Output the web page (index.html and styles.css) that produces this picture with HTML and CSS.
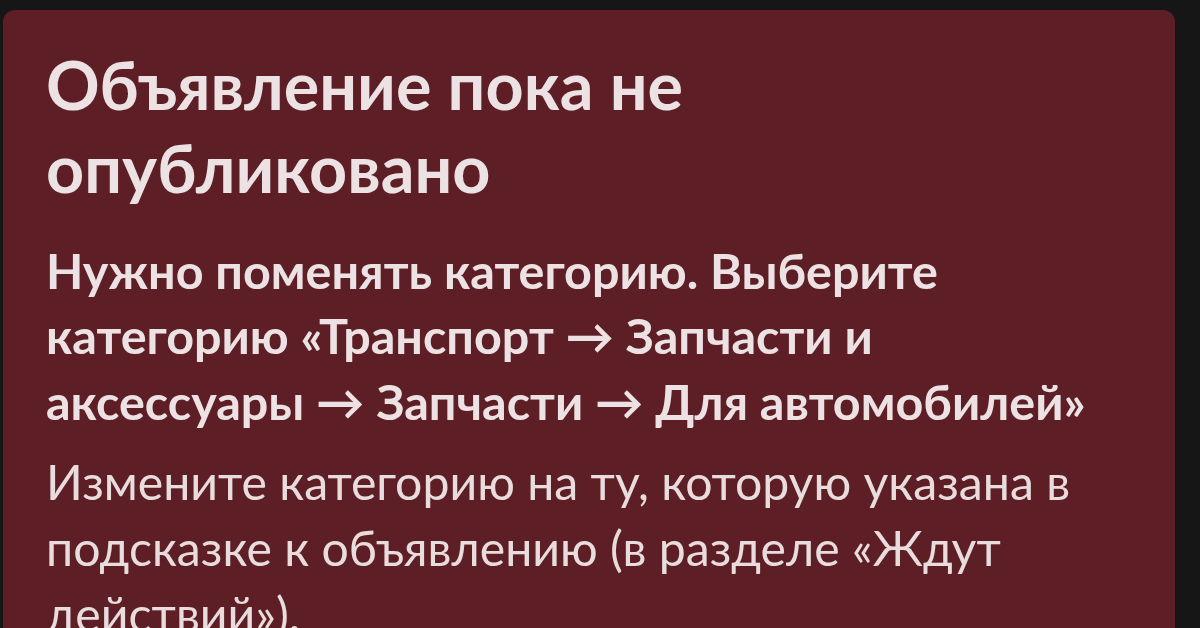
FILE: index.html
```html
<!DOCTYPE html>
<html lang="ru">
<head>
<meta charset="utf-8">
<link rel="stylesheet" href="styles.css">
</head>
<body>
<div class="page">
  <section class="card">
    <h1 class="title">Объявление пока не опубликовано</h1>
    <p class="reason">Нужно поменять категорию. Выберите категорию «Транспорт → Запчасти и аксессуары → Запчасти → Для автомобилей»</p>
    <p class="hint">Измените категорию на ту, которую указана в подсказке к объявлению (в разделе «Ждут действий»).</p>
  </section>
</div>
</body>
</html>
```
FILE: styles.css
```css
html, body {
  margin: 0;
  padding: 0;
  background: #161616;
  height: 100%;
  overflow: hidden;
}
.page {
  padding: 10px 25px 0 3px;
}
.card {
  background: #5d1e26;
  border-radius: 12px;
  padding: 33px 75px 40px 43px;
  min-height: 700px;
  font-family: Lato, "Open Sans", "Noto Sans", sans-serif;
  color: #ece2e3;
}
.title {
  margin: 0;
  font-size: 66.5px;
  font-weight: 700;
  line-height: 83px;
}
.reason {
  margin: 28.5px 0 0;
  font-size: 48.5px;
  font-weight: 700;
  line-height: 65.5px;
}
.hint {
  margin: 14px 0 0;
  font-size: 48.2px;
  font-weight: 400;
  line-height: 66px;
  color: #e8dcdd;
}
```
